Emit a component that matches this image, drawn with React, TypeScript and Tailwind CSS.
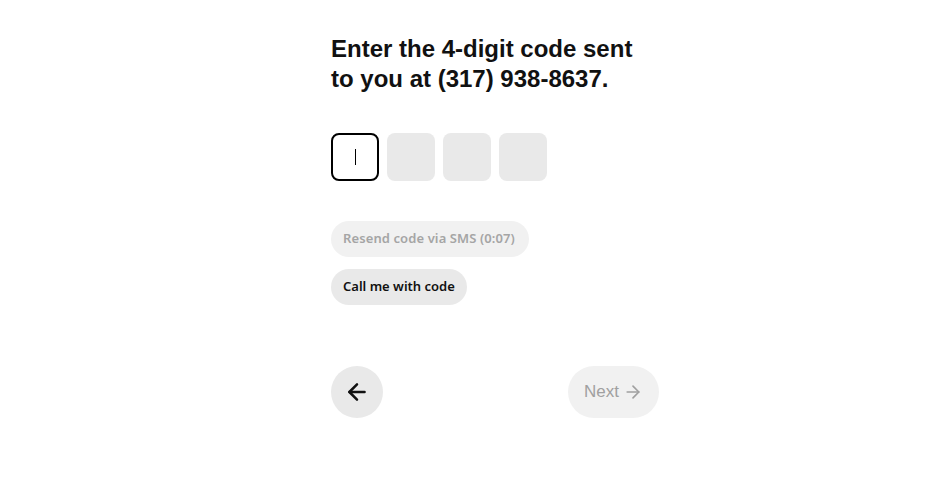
import { ArrowLeft, ArrowRight } from "lucide-react";

const ui = { fontFamily: '"Noto Sans", "Open Sans", sans-serif' };
const arial = { fontFamily: '"Liberation Sans", Arial, sans-serif' };

function CodeBoxes() {
  return (
    <div className="flex gap-2">
      <div className="flex h-12 w-12 items-center justify-center rounded-lg border-2 border-black bg-white">
        <span className="h-[16px] w-px bg-black" />
      </div>
      {[1, 2, 3].map((i) => (
        <div key={i} className="h-12 w-12 rounded-lg bg-[#e9e9e9]" />
      ))}
    </div>
  );
}

export default function App() {
  return (
    <div className="flex min-h-[486px] justify-center bg-white pl-[48px] pt-[34px]">
      <div className="w-[328px]">
        <h1
          className="text-[24px] font-bold leading-[30px] text-[#111]"
          style={arial}
        >
          Enter the 4-digit code sent
          <br />
          to you at (317) 938-8637.
        </h1>

        <div className="mt-[39px]">
          <CodeBoxes />
        </div>

        <div className="mt-10 flex flex-col items-start gap-3" style={ui}>
          <button className="h-9 rounded-full bg-[#f1f1f1] pl-3 pr-[14px] text-[13px] font-semibold tracking-[0.1px] text-[#a5a5a5]">
            Resend code via SMS (0:07)
          </button>
          <button className="h-9 rounded-full bg-[#e9e9e9] px-3 text-[13px] font-semibold text-[#111]">
            Call me with code
          </button>
        </div>

        <div className="mt-[61px] flex items-center justify-between">
          <button className="flex h-[52px] w-[52px] items-center justify-center rounded-full bg-[#e9e9e9] text-[#111]">
            <ArrowLeft className="h-[26px] w-[26px]" strokeWidth={2.3} />
          </button>
          <button
            className="flex h-[52px] items-center gap-1 rounded-full bg-[#f1f1f1] px-4 text-[17px] text-[#a0a0a0]"
            style={arial}
          >
            Next
            <ArrowRight className="h-5 w-5" strokeWidth={2} />
          </button>
        </div>
      </div>
    </div>
  );
}
